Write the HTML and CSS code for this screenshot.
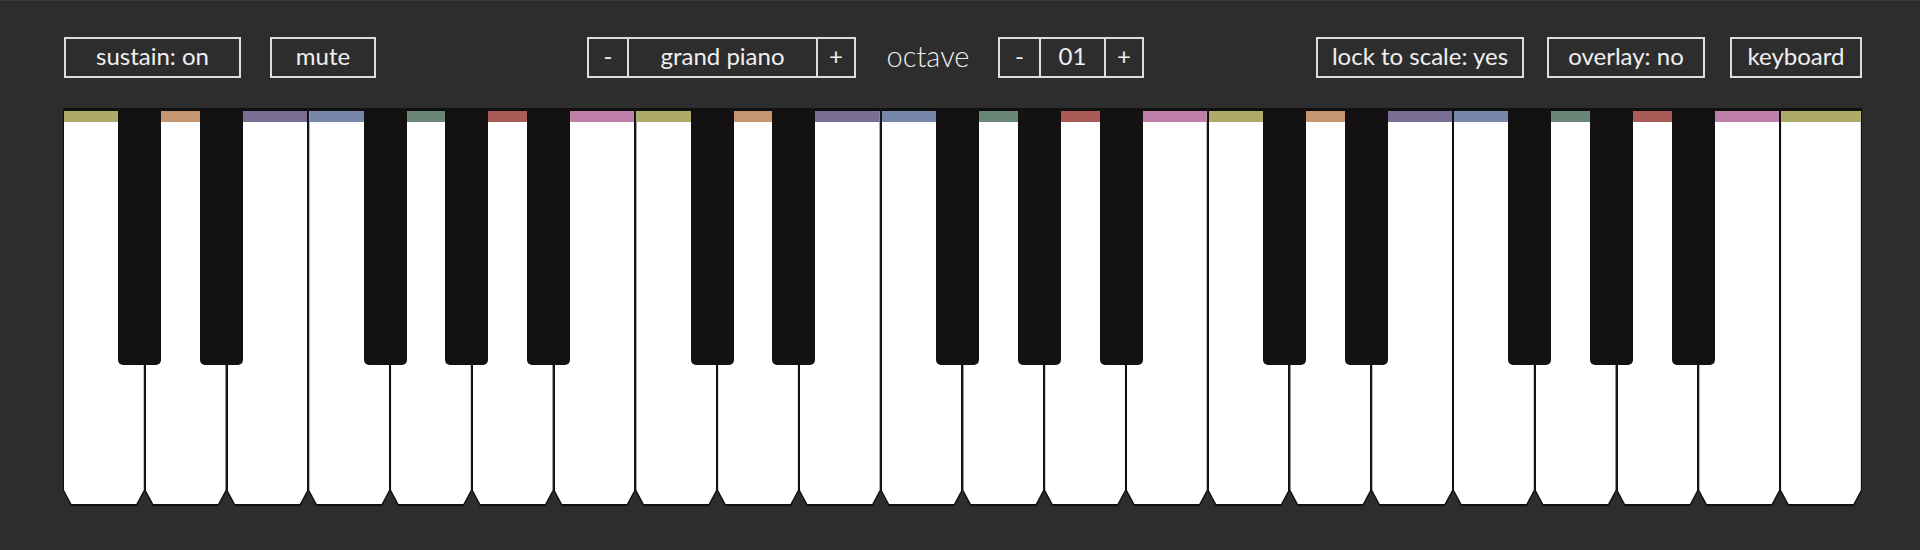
FILE: index.html
```html
<!DOCTYPE html>
<html lang="en">
<head>
<meta charset="utf-8">
<title>Piano</title>
<link rel="stylesheet" href="styles.css">
</head>
<body>
<div class="app">
  <div class="toolbar">
    <div class="group group-left">
      <div class="btn btn-sustain">sustain: on</div>
      <div class="btn btn-mute">mute</div>
    </div>
    <div class="group group-center">
      <div class="stepper stepper-instrument">
        <div class="seg seg-minus">-</div>
        <div class="seg seg-value">grand piano</div>
        <div class="seg seg-plus">+</div>
      </div>
      <div class="label-octave">octave</div>
      <div class="stepper stepper-octave">
        <div class="seg seg-minus">-</div>
        <div class="seg seg-value">01</div>
        <div class="seg seg-plus">+</div>
      </div>
    </div>
    <div class="group group-right">
      <div class="btn btn-lock">lock to scale: yes</div>
      <div class="btn btn-overlay">overlay: no</div>
      <div class="btn btn-keyboard">keyboard</div>
    </div>
  </div>

  <div class="keyboard">
    <div class="wkey k-c"><div class="face"></div></div>
    <div class="wkey k-d"><div class="face"></div></div>
    <div class="wkey k-e"><div class="face"></div></div>
    <div class="wkey k-f"><div class="face"></div></div>
    <div class="wkey k-g"><div class="face"></div></div>
    <div class="wkey k-a"><div class="face"></div></div>
    <div class="wkey k-b"><div class="face"></div></div>
    <div class="wkey k-c"><div class="face"></div></div>
    <div class="wkey k-d"><div class="face"></div></div>
    <div class="wkey k-e"><div class="face"></div></div>
    <div class="wkey k-f"><div class="face"></div></div>
    <div class="wkey k-g"><div class="face"></div></div>
    <div class="wkey k-a"><div class="face"></div></div>
    <div class="wkey k-b"><div class="face"></div></div>
    <div class="wkey k-c"><div class="face"></div></div>
    <div class="wkey k-d"><div class="face"></div></div>
    <div class="wkey k-e"><div class="face"></div></div>
    <div class="wkey k-f"><div class="face"></div></div>
    <div class="wkey k-g"><div class="face"></div></div>
    <div class="wkey k-a"><div class="face"></div></div>
    <div class="wkey k-b"><div class="face"></div></div>
    <div class="wkey k-c"><div class="face"></div></div>

    <div class="black-row">
      <div class="slot"><div class="bkey"></div></div>
      <div class="slot"><div class="bkey"></div></div>
      <div class="slot"></div>
      <div class="slot"><div class="bkey"></div></div>
      <div class="slot"><div class="bkey"></div></div>
      <div class="slot"><div class="bkey"></div></div>
      <div class="slot"></div>
      <div class="slot"><div class="bkey"></div></div>
      <div class="slot"><div class="bkey"></div></div>
      <div class="slot"></div>
      <div class="slot"><div class="bkey"></div></div>
      <div class="slot"><div class="bkey"></div></div>
      <div class="slot"><div class="bkey"></div></div>
      <div class="slot"></div>
      <div class="slot"><div class="bkey"></div></div>
      <div class="slot"><div class="bkey"></div></div>
      <div class="slot"></div>
      <div class="slot"><div class="bkey"></div></div>
      <div class="slot"><div class="bkey"></div></div>
      <div class="slot"><div class="bkey"></div></div>
      <div class="slot"></div>
      <div class="slot"></div>
    </div>
  </div>
</div>
</body>
</html>
```

FILE: styles.css
```css
* {
  box-sizing: border-box;
}

html,
body {
  margin: 0;
  height: 100%;
}

body {
  background: #2d2d2d;
  border-top: 1px solid #3a3a3a;
  font-family: Lato, "Open Sans", "DejaVu Sans", sans-serif;
  color: #efefef;
  overflow: hidden;
}

.app {
  padding: 36px 58px 0 63px;
}

/* ---------- toolbar ---------- */

.toolbar {
  display: flex;
  align-items: center;
  height: 41px;
}

.group {
  display: flex;
  align-items: center;
}

.group-left {
  gap: 29px;
  margin-left: 1px;
}

.group-center {
  margin-left: 211px;
}

.group-right {
  margin-left: auto;
}

.btn,
.stepper {
  height: 41px;
  border: 2px solid #dedede;
}

.btn {
  display: flex;
  align-items: center;
  justify-content: center;
  font-size: 24px;
  line-height: 1;
  white-space: nowrap;
  padding-bottom: 3px;
}

.btn-sustain { width: 177px; }
.btn-mute { width: 106px; }
.btn-lock { width: 208px; }
.btn-overlay { width: 158px; margin-left: 23px; }
.btn-keyboard { width: 132px; margin-left: 25px; }

.stepper {
  display: flex;
}

.seg {
  display: flex;
  align-items: center;
  justify-content: center;
  font-size: 24px;
  line-height: 1;
  padding-bottom: 3px;
  white-space: nowrap;
}

.seg + .seg {
  border-left: 2px solid #dedede;
}

.stepper-instrument { width: 269px; }
.stepper-instrument .seg-minus { width: 38px; }
.stepper-instrument .seg-value { width: 189px; }
.stepper-instrument .seg-plus { width: 38px; }

.stepper-octave { width: 146px; }
.stepper-octave .seg-minus { width: 39px; }
.stepper-octave .seg-value { width: 65px; }
.stepper-octave .seg-plus { width: 38px; }

.label-octave {
  width: 82px;
  margin: 0 29px 0 31px;
  display: flex;
  justify-content: center;
  font-size: 29px;
  font-weight: 300;
  line-height: 1;
  padding-bottom: 4px;
  color: #ececec;
}

/* ---------- keyboard ---------- */

.keyboard {
  position: relative;
  display: flex;
  height: 398px;
  margin-top: 30px;
}

.wkey {
  flex: 1 1 0;
  min-width: 0;
  background: #111010;
  padding: 3px 1px 2px;
  clip-path: polygon(0 0, 100% 0, 100% calc(100% - 15px), calc(100% - 8px) 100%, 8px 100%, 0 calc(100% - 15px));
}

.face {
  height: 100%;
  background: #ffffff;
  border-top: 11px solid var(--bar);
  clip-path: polygon(0 0, 100% 0, 100% calc(100% - 14px), calc(100% - 7.5px) 100%, 7.5px 100%, 0 calc(100% - 14px));
}

.k-c { --bar: #aeaa68; }
.k-d { --bar: #c69670; }
.k-e { --bar: #7b6e93; }
.k-f { --bar: #7787aa; }
.k-g { --bar: #6a8677; }
.k-a { --bar: #ab5b57; }
.k-b { --bar: #c07fa8; }

.black-row {
  position: absolute;
  top: 0;
  left: 0;
  right: 0;
  height: 257px;
  display: grid;
  grid-template-columns: repeat(22, 1fr);
  pointer-events: none;
}

.slot {
  display: flex;
  justify-content: flex-end;
  min-width: 0;
}

.bkey {
  flex: 0 0 43px;
  width: 43px;
  height: 100%;
  margin-right: -16.5px;
  background: #141112;
  border-radius: 0 0 5px 5px;
}
```
